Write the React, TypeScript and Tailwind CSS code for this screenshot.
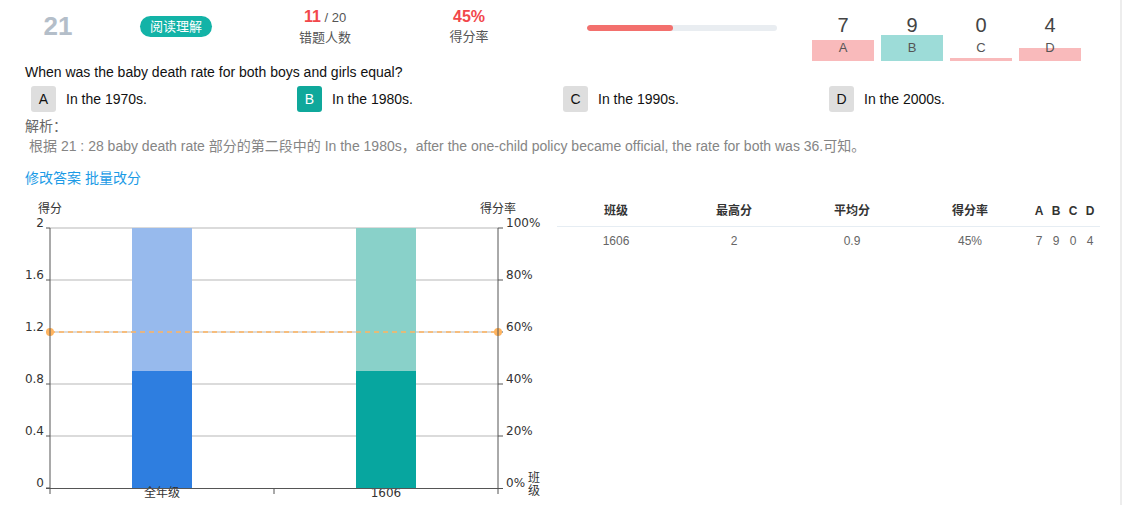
import React from "react";

const FONT = { fontFamily: '"Liberation Sans", Arial, "Noto Sans CJK SC", sans-serif' };

const counts = [
  { letter: "A", n: 7, bar: "h-[21px] bg-[#f9babb]" },
  { letter: "B", n: 9, bar: "h-[26px] bg-[#9ddcd8]" },
  { letter: "C", n: 0, bar: "h-[3px] bg-[#f9babb]" },
  { letter: "D", n: 4, bar: "h-[13px] bg-[#f9babb]" },
];

const options = [
  { letter: "A", text: "In the 1970s.", right: false },
  { letter: "B", text: "In the 1980s.", right: true },
  { letter: "C", text: "In the 1990s.", right: false },
  { letter: "D", text: "In the 2000s.", right: false },
];

function Header() {
  return (
    <div className="flex items-start h-[62px]">
      <div className="w-[116px] mt-[13px] text-center text-[26px] leading-[26px] font-bold text-[#b4bec9]">21</div>
      <div className="ml-[24px] mt-[16px] w-[72px] h-[21px] rounded-full bg-[#13b3a7] text-white text-[13px] leading-[21px] text-center">
        阅读理解
      </div>
      <div className="ml-[63px] mt-[7px] w-[100px] text-center">
        <div className="leading-[20px]">
          <span className="text-[16px] font-bold text-[#f2474b]">11</span>
          <span className="text-[13px] text-[#555]"> / 20</span>
        </div>
        <div className="text-[13px] leading-[20px] text-[#555]">错题人数</div>
      </div>
      <div className="ml-[44px] mt-[7px] w-[100px] text-center">
        <div className="text-[16px] leading-[20px] font-bold text-[#f2474b]">45%</div>
        <div className="text-[13px] leading-[20px] text-[#555]">得分率</div>
      </div>
      <div className="ml-[68px] mt-[25px] w-[190px] h-[6px] rounded-full bg-[#e9edf1] overflow-hidden">
        <div className="w-[45%] h-full rounded-full bg-[#f3706d]" />
      </div>
      <div className="ml-[35px] mt-[11px] flex gap-[7px]">
        {counts.map((c) => (
          <div key={c.letter} className="w-[62px] flex flex-col">
            <div className="h-[24px] text-center text-[20px] leading-[28px] text-[#444]">{c.n}</div>
            <div className="relative h-[26px] flex items-end">
              <div className={`w-full ${c.bar}`} />
              <div className="absolute inset-0 flex items-center justify-center text-[13px] text-[#555]">{c.letter}</div>
            </div>
          </div>
        ))}
      </div>
    </div>
  );
}

function Question() {
  return (
    <div className="pl-[25px]">
      <div className="text-[14px] leading-[20px] text-[#111]">When was the baby death rate for both boys and girls equal?</div>
      <div className="mt-[4px] pl-[6px] flex">
        {options.map((o) => (
          <div key={o.letter} className="w-[266px] flex items-center">
            <div
              className={`w-[25px] h-[26px] rounded-[3px] flex items-center justify-center text-[14px] ${
                o.right ? "bg-[#0fa89b] text-white" : "bg-[#dedede] text-[#111]"
              }`}
            >
              {o.letter}
            </div>
            <div className="ml-[10px] text-[14px] text-[#111]">{o.text}</div>
          </div>
        ))}
      </div>
      <div className="mt-[4px] text-[14px] leading-[20px] text-[#666]">解析：</div>
      <div className="pl-[4px] text-[14px] leading-[20px] text-[#858585]">
        根据 21 : 28 baby death rate 部分的第二段中的 In the 1980s，after the one-child policy became official, the rate for both was 36.可知。
      </div>
      <div className="mt-[12px] text-[14px] leading-[20px] text-[#1b9be6]">修改答案 批量改分</div>
    </div>
  );
}

function Chart() {
  const grid = [33, 85, 137, 189, 241];
  const left = ["2", "1.6", "1.2", "0.8", "0.4"];
  const right = ["100%", "80%", "60%", "40%", "20%"];
  const tf = { fontFamily: '"DejaVu Sans", "Noto Sans CJK SC", sans-serif', fontSize: 12, fill: "#333" };
  return (
    <svg width="557" height="310" className="shrink-0">
      <text x="38" y="18" style={tf}>得分</text>
      <text x="480" y="18" style={tf}>得分率</text>
      {grid.map((y, i) => (
        <g key={y}>
          <line x1="50" y1={y} x2="498" y2={y} stroke="#cfcfcf" strokeWidth="1.5" />
          <line x1="46" y1={y} x2="50" y2={y} stroke="#555" />
          <line x1="498" y1={y} x2="503" y2={y} stroke="#555" />
          <text x="44" y={y - 1} textAnchor="end" style={tf}>{left[i]}</text>
          <text x="506" y={y - 1} style={tf}>{right[i]}</text>
        </g>
      ))}
      <text x="44" y="292" textAnchor="end" style={tf}>0</text>
      <text x="506" y="292" style={tf}>0%</text>
      <text x="528" y="287" style={tf}>班</text>
      <text x="528" y="300" style={tf}>级</text>

      <rect x="132" y="33" width="60" height="143" fill="#97baed" />
      <rect x="132" y="176" width="60" height="117" fill="#2e7ee0" />
      <rect x="356" y="33" width="60" height="143" fill="#89d1c9" />
      <rect x="356" y="176" width="60" height="117" fill="#07a69f" />

      <text x="162" y="302" textAnchor="middle" style={tf}>全年级</text>
      <text x="386" y="302" textAnchor="middle" style={tf}>1606</text>

      <line x1="50" y1="137" x2="498" y2="137" stroke="#ffb45f" strokeWidth="1.5" strokeDasharray="5 4" />
      <circle cx="50" cy="137" r="4" fill="#ffb45f" />
      <circle cx="498" cy="137" r="4" fill="#ffb45f" />

      <line x1="50" y1="33" x2="50" y2="294" stroke="#555" />
      <line x1="498" y1="33" x2="498" y2="294" stroke="#555" />
      <line x1="46" y1="293.5" x2="503" y2="293.5" stroke="#555" />
      <line x1="46" y1="293" x2="50" y2="293" stroke="#555" />
      {[50, 274, 498].map((x) => (
        <line key={x} x1={x} y1="293" x2={x} y2="299" stroke="#555" />
      ))}
    </svg>
  );
}

function ScoreTable() {
  const cols = "grid grid-cols-[118px_118px_118px_118px_71px]";
  return (
    <div className="w-[543px] text-[12px]">
      <div className={`${cols} h-[32px] items-center border-b border-[#e6edf3] font-bold text-[#333]`}>
        <div className="text-center">班级</div>
        <div className="text-center">最高分</div>
        <div className="text-center">平均分</div>
        <div className="text-center">得分率</div>
        <div className="flex justify-center">
          {["A", "B", "C", "D"].map((l) => (
            <span key={l} className="w-[17px] text-center">{l}</span>
          ))}
        </div>
      </div>
      <div className={`${cols} h-[28px] items-center text-[#666]`}>
        <div className="text-center">1606</div>
        <div className="text-center">2</div>
        <div className="text-center">0.9</div>
        <div className="text-center">45%</div>
        <div className="flex justify-center">
          {[7, 9, 0, 4].map((n, i) => (
            <span key={i} className="w-[17px] text-center">{n}</span>
          ))}
        </div>
      </div>
    </div>
  );
}

export default function App() {
  return (
    <div className="w-[1122px] h-[505px] bg-white border-r-2 border-[#ededed] overflow-hidden" style={FONT}>
      <Header />
      <Question />
      <div className="mt-[7px] flex">
        <Chart />
        <ScoreTable />
      </div>
    </div>
  );
}
